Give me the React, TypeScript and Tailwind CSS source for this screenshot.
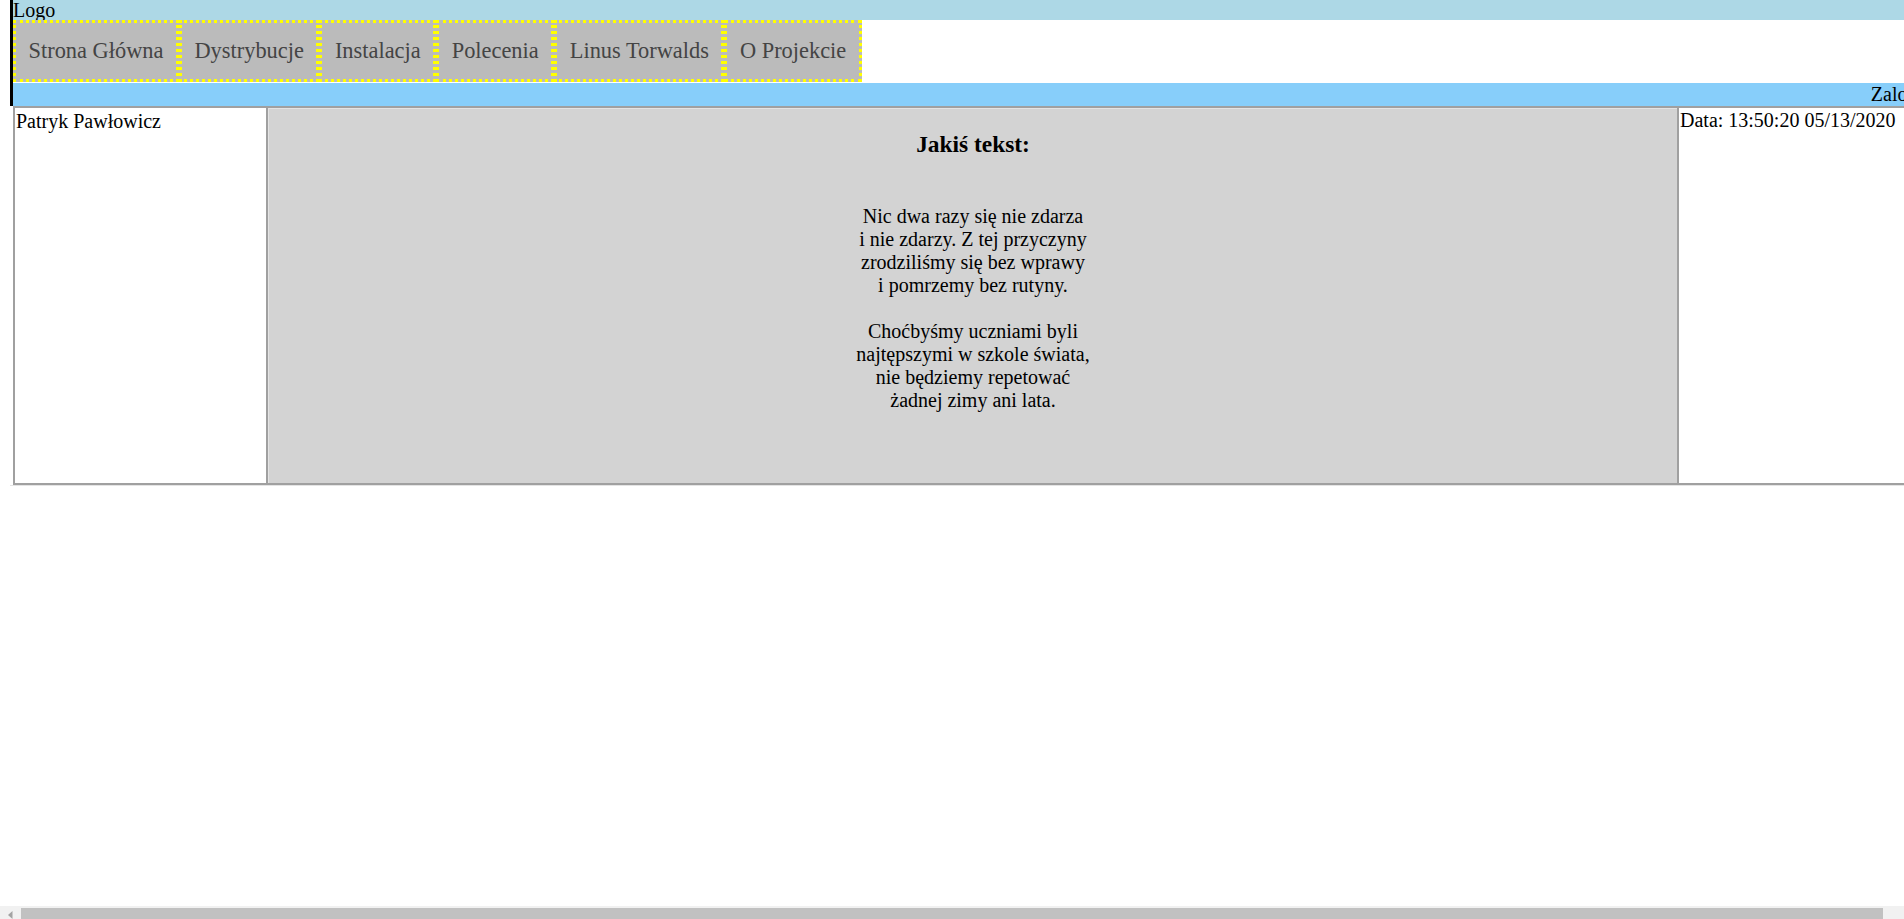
import React from "react";

const navItems = [
  "Strona Główna",
  "Dystrybucje",
  "Instalacja",
  "Polecenia",
  "Linus Torwalds",
  "O Projekcie",
];

const poem1 = [
  "Nic dwa razy się nie zdarza",
  "i nie zdarzy. Z tej przyczyny",
  "zrodziliśmy się bez wprawy",
  "i pomrzemy bez rutyny.",
];
const poem2 = [
  "Choćbyśmy uczniami byli",
  "najtępszymi w szkole świata,",
  "nie będziemy repetować",
  "żadnej zimy ani lata.",
];

function FakeScrollbar() {
  return (
    <div aria-hidden="true" className="fixed bottom-0 left-0 h-[13px] w-full bg-[#f1f1f1]">
      <div className="absolute left-[21px] right-[21px] top-[2px] bottom-0 bg-[#c1c1c1]" />
      <svg className="absolute left-0 top-0" width="17" height="13" viewBox="0 0 17 13">
        <polygon points="12.5,5 12.5,13 8,9" fill="#a3a3a3" />
      </svg>
    </div>
  );
}

export default function App() {
  return (
    <div className="w-[1933px] pl-[10px] font-['Liberation_Serif',serif] text-[20px] leading-[23px] text-black bg-white">
      <header className="border-l-[3px] border-black">
        <div className="h-[20px] bg-[#add8e6] leading-[20px] whitespace-nowrap">Logo</div>
        <nav className="flex h-[63px] items-start bg-white">
          {navItems.map((item) => (
            <div
              key={item}
              className="border-[3px] border-dotted border-[#ffff00] bg-[#bbbbbb] px-[12.5px] py-[15px] text-[22.4px] leading-[25.7px] text-[#444444] whitespace-nowrap"
            >
              {item}
            </div>
          ))}
        </nav>
        <div className="h-[23px] bg-[#87cefa] text-right leading-[23px] whitespace-nowrap">
          Zaloguj
        </div>
      </header>
      <div className="ml-[3px] border-t-2 border-l-2 border-b-2 border-[#a0a0a0]">
        <div className="flex">
          <div className="w-[253px] shrink-0 border-r-2 border-[#a0a0a0] bg-white pt-[2px] pl-px whitespace-nowrap">
            Patryk Pawłowicz
          </div>
          <div className="w-[1409px] shrink-0 border-t border-l border-[#e4e4e4] bg-[#d3d3d3] pt-[22.4px] pb-[71px] text-center">
            <h3 className="text-[23.4px] font-bold leading-[26.9px]">Jakiś tekst:</h3>
            <div className="mt-[47px]">
              {poem1.map((l) => (
                <div key={l}>{l}</div>
              ))}
              <div className="h-[23px]" />
              {poem2.map((l) => (
                <div key={l}>{l}</div>
              ))}
            </div>
          </div>
          <div className="flex-1 border-l-2 border-[#a0a0a0] bg-white pt-px pl-px whitespace-nowrap">
            Data: 13:50:20 05/13/2020
          </div>
        </div>
      </div>
      <div className="h-px bg-[#e4e4e4]" />
      <FakeScrollbar />
    </div>
  );
}
